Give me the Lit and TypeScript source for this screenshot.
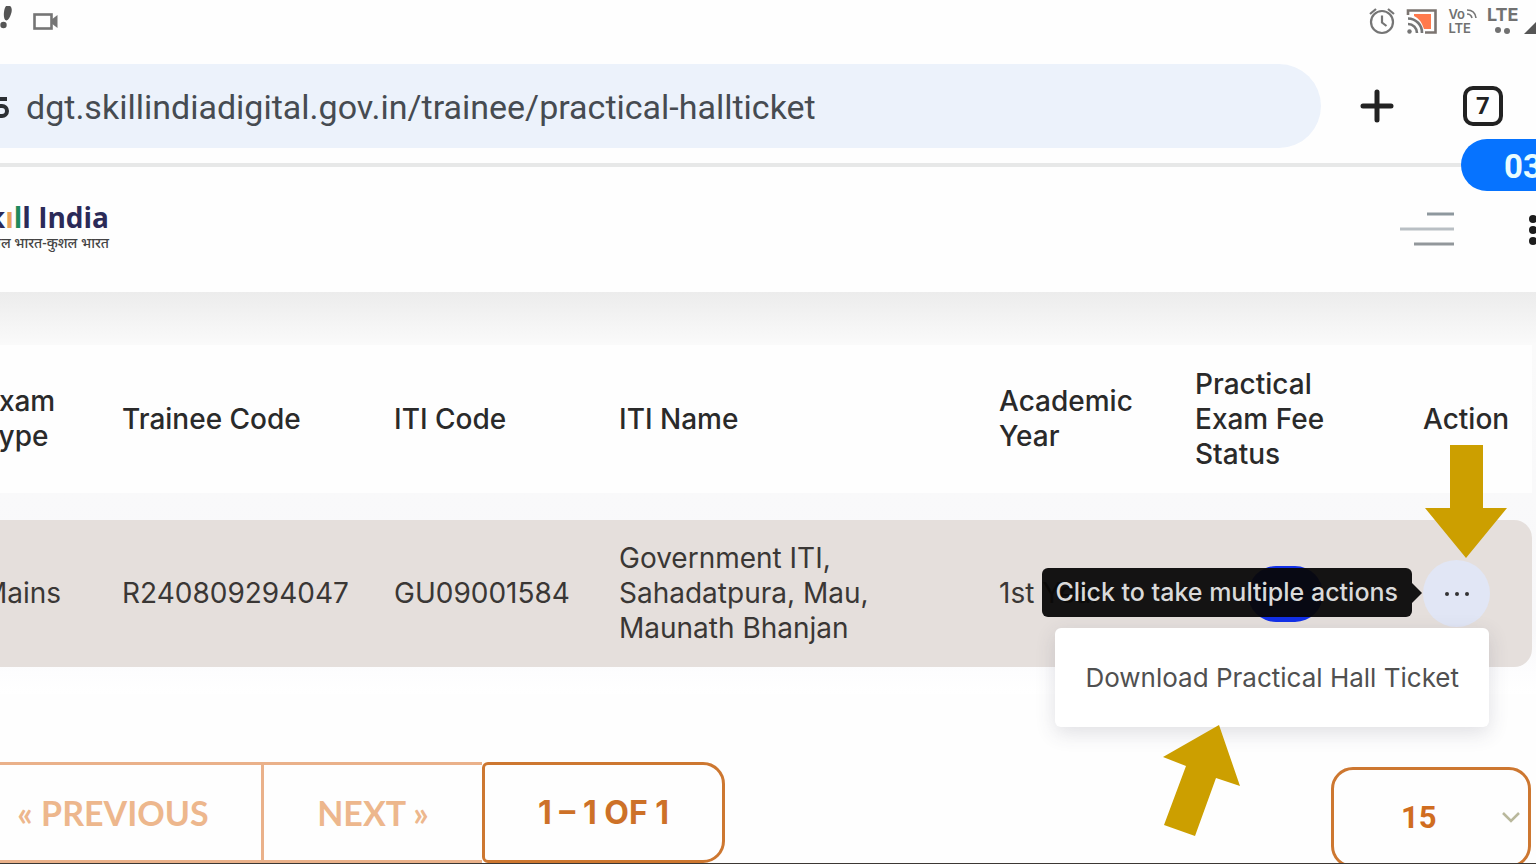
import { LitElement, html, css } from "lit";
import { customElement, state } from "lit/decorators.js";

@customElement("status-bar")
class StatusBar extends LitElement {
  static styles = css`
    :host {
      display: flex;
      justify-content: space-between;
      height: 64px;
      overflow: hidden;
      color: #717171;
      font-family: Inter, sans-serif;
    }
    .group {
      display: flex;
      align-items: flex-start;
      padding-top: 6px;
    }
    .left {
      gap: 20px;
    }
    .right {
      gap: 10px;
      margin-right: -6px;
    }
    svg {
      display: block;
      flex: none;
    }
    .volte {
      font-size: 13px;
      line-height: 14px;
      font-weight: 600;
      padding-top: 1px;
    }
    .volte svg {
      display: inline-block;
    }
    .lte {
      width: 27px;
      font-size: 18px;
      line-height: 18px;
      font-weight: 700;
    }
  `;
  render() {
    return html`
      <div class="group left">
        <svg width="13" height="30" viewBox="0 0 13 30" fill="#555">
          <path d="M8 -1c4 1 4.500 5 3 9-1 3-2.500 6-4.500 6.500C4 14 3.500 10 4 6c.400-4 2-7 4-7z" />
          <circle cx="3.500" cy="19" r="3.200" />
        </svg>
        <svg width="26" height="30" viewBox="0 0 26 30" fill="none">
          <rect x="1.500" y="8.500" width="17" height="14" stroke="#757575" stroke-width="2.600" />
          <path d="M18 14l6.500-5v13L18 17z" fill="#757575" />
        </svg>
      </div>
      <div class="group right">
        <svg width="28" height="30" viewBox="0 0 28 30" fill="none" stroke="#757575" stroke-width="2.200">
          <circle cx="14" cy="16" r="11" />
          <path d="M14 9.500v7l4.500 3.500M2 8l6-5M26 8l-6-5" />
        </svg>
        <svg width="32" height="30" viewBox="0 0 32 30" fill="none">
          <path d="M8 8h17v15h-7Q15 13 8 10z" fill="#ff7a4d" />
          <path d="M2 9V4.500h27.500v22H19" stroke="#7b7470" stroke-width="2.600" />
          <path d="M2 12.500a14 14 0 0 1 14 14.500M2 18a9 9 0 0 1 9 9" stroke="#757575" stroke-width="2.600" />
          <circle cx="3.500" cy="25.500" r="2.200" fill="#757575" />
        </svg>
        <div class="volte">
          Vo<svg width="12" height="10" viewBox="0 0 12 10" fill="none" stroke="#757575" stroke-width="1.600"><path d="M2 1q8 0 9 8M2 5q4 0 5 4" /></svg><br />LTE
        </div>
        <div class="lte">
          LTE
          <svg width="34" height="12" viewBox="0 0 34 12" fill="#717171"><circle cx="11" cy="6" r="3" /><circle cx="20" cy="7" r="3" /></svg>
        </div>
        <svg width="18" height="30" viewBox="0 0 18 30"><path d="M0 28L18 10v18z" fill="#555" /></svg>
      </div>
    `;
  }
}

@customElement("browser-bar")
class BrowserBar extends LitElement {
  static styles = css`
    :host {
      display: block;
      position: relative;
      padding-bottom: 15px;
      border-bottom: 4px solid #e7e8e8;
      font-family: Roboto, sans-serif;
    }
    .bar {
      display: flex;
      align-items: center;
    }
    .pill {
      flex: 1;
      display: flex;
      align-items: center;
      gap: 16px;
      height: 84px;
      background: #ecf2fb;
      border-radius: 0 42px 42px 0;
    }
    .url {
      flex: 1;
      min-width: 0;
      height: 60px;
      padding: 2px 0 0;
      border: 0;
      outline: 0;
      background: none;
      color: #464b51;
      font: 400 34px/58px Roboto, sans-serif;
    }
    button {
      display: block;
      border: 0;
      padding: 0;
      background: none;
      color: #222;
    }
    .plus {
      width: 36px;
      height: 36px;
      margin: 0 68px 0 38px;
    }
    .tabs {
      box-sizing: border-box;
      width: 40px;
      height: 40px;
      margin-right: 33px;
      border: 4px solid #222;
      border-radius: 10px;
      font: 700 24px/32px Roboto, sans-serif;
    }
    svg {
      display: block;
    }
    .timer {
      position: absolute;
      right: 0;
      top: 75px;
      box-sizing: border-box;
      width: 75px;
      height: 52px;
      padding-left: 43px;
      overflow: hidden;
      border-radius: 26px 0 0 26px;
      background: #0673ff;
      color: #e9fcff;
      font: 700 33px/56px Roboto, sans-serif;
    }
  `;
  render() {
    return html`
      <div class="bar">
        <div class="pill">
          <svg width="10" height="28" viewBox="0 0 10 28" fill="none" stroke="#2b2f33" stroke-width="4">
            <path d="M0 7h7M0 14h2a4.500 4.500 0 0 1 0 10H0" />
          </svg>
          <input class="url" aria-label="Address" value="dgt.skillindiadigital.gov.in/trainee/practical-hallticket" />
        </div>
        <button class="plus" aria-label="New tab">
          <svg width="36" height="36" viewBox="0 0 36 36" stroke="#222" stroke-width="5" stroke-linecap="round"><path d="M18 4v28M4 18h28" /></svg>
        </button>
        <button class="tabs" aria-label="Open tabs">7</button>
      </div>
      <div class="timer">03</div>
    `;
  }
}

@customElement("site-header")
class SiteHeader extends LitElement {
  static styles = css`
    :host {
      display: flex;
      justify-content: space-between;
      align-items: center;
      height: 125px;
      overflow: hidden;
    }
    .logo {
      display: block;
      width: 109px;
      padding-bottom: 6px;
      direction: rtl;
      color: #2b2a58;
      text-decoration: none;
      white-space: nowrap;
    }
    .name,
    .tag {
      display: block;
      unicode-bidi: isolate;
    }
    .name span,
    .tag span {
      direction: ltr;
      unicode-bidi: isolate;
    }
    .name {
      font: 700 28px/32px "Open Sans", sans-serif;
    }
    .name .i {
      color: #e9a05a;
    }
    .name .l {
      color: #1f8a5c;
    }
    .tag {
      font: 500 14px/20px "Noto Sans", sans-serif;
      color: #444;
    }
    .tools {
      display: flex;
      align-items: center;
      gap: 73px;
      margin-right: -6px;
    }
    button {
      border: 0;
      padding: 0;
      background: none;
    }
    svg {
      display: block;
    }
  `;
  render() {
    return html`
      <a class="logo" href="#">
        <span class="name"><span>Sk<span class="i">ı</span><span class="l">l</span>l India</span></span>
        <span class="tag"><span lang="hi">कौशल भारत-कुशल भारत</span></span>
      </a>
      <div class="tools">
        <button aria-label="Menu">
          <svg width="56" height="40" viewBox="0 0 56 40" stroke-width="3">
            <path d="M28 4h27" stroke="#8e989e" /><path d="M1 19h54" stroke="#b9bfc4" /><path d="M15 34h40" stroke="#92979b" />
          </svg>
        </button>
        <button aria-label="More options">
          <svg width="14" height="34" viewBox="0 0 14 34" fill="#1c1c1c"><circle cx="5" cy="6" r="4" /><circle cx="5" cy="17" r="4" /><circle cx="5" cy="28" r="4" /></svg>
        </button>
      </div>
    `;
  }
}

const headers = ["Exam Type", "Trainee Code", "ITI Code", "ITI Name", "Academic Year", "Practical Exam Fee Status", "Action"];

@customElement("trainee-table")
class TraineeTable extends LitElement {
  static styles = css`
    :host {
      display: block;
      padding: 26px 4px 0 0;
      background: linear-gradient(#ececec, #fafafa 52px, #f8f8fa 340px, #fdfdfe 380px, #fff);
      font-family: Inter, sans-serif;
    }
    .scroll {
      margin-left: -42px;
    }
    table {
      width: 100%;
      table-layout: fixed;
      border-collapse: separate;
      border-spacing: 0 27px;
      font-size: 28px;
      line-height: 35px;
    }
    th,
    td {
      height: 147px;
      padding: 0 24px;
      text-align: left;
      vertical-align: middle;
      box-sizing: border-box;
    }
    th {
      height: 148px;
      background: #fefefe;
      color: #2a2a2a;
      font-weight: 500;
    }
    td {
      background: #e5dfdc;
      color: #3a3735;
    }
    th:last-child,
    td:last-child {
      padding-right: 0;
    }
    td:last-child {
      border-radius: 0 18px 18px 0;
    }
    .c0 { width: 140px; }
    .c1 { width: 272px; }
    .c2 { width: 225px; }
    .c4 { width: 196px; }
    .c5 { width: 228px; }
    .c6 { width: 133px; }
    .institute {
      padding-right: 90px;
    }
    .status {
      text-align: center;
    }
    .badge {
      display: block;
      width: 75px;
      height: 56px;
      margin: 0 auto;
      border-radius: 28px;
      background: #1230e8;
    }
    .actions {
      position: relative;
      width: 67px;
      height: 67px;
    }
    .more {
      display: block;
      width: 67px;
      height: 67px;
      padding: 0;
      border: 0;
      border-radius: 50%;
      background: #e1e6f5;
    }
    .more svg {
      display: block;
      margin: auto;
    }
    .tooltip {
      position: absolute;
      top: 8px;
      right: 78px;
      padding: 0 14px;
      border-radius: 6px;
      background: rgba(8, 7, 7, 0.95);
      color: #dadada;
      font-size: 25px;
      font-weight: 500;
      line-height: 49px;
      white-space: nowrap;
    }
    .tooltip::after {
      content: "";
      position: absolute;
      left: 100%;
      top: 15px;
      border: 10px solid transparent;
      border-left-color: #141313;
      border-right: 0;
    }
    .menu {
      position: absolute;
      top: 68px;
      right: 1px;
      margin: 0;
      padding: 0;
      list-style: none;
      border-radius: 6px;
      background: #fff;
      box-shadow: 0 6px 20px rgba(60, 60, 90, 0.16);
    }
    .item {
      display: block;
      padding: 0 30px;
      border: 0;
      background: none;
      color: #505050;
      font: 400 26px/99px Inter, sans-serif;
      white-space: nowrap;
    }
    .arrow {
      position: absolute;
      display: block;
      pointer-events: none;
      fill: #cc9f00;
    }
    .down {
      left: 2px;
      top: -115px;
    }
    .up {
      left: 108px;
      top: 97px;
    }
  `;
  @state() open = true;
  render() {
    return html`
      <div class="scroll">
        <table>
          <thead>
            <tr>
              ${headers.map((h, i) => html`<th scope="col" class="c${i}">${h}</th>`)}
            </tr>
          </thead>
          <tbody>
            <tr>
              <td>Mains</td>
              <td>R240809294047</td>
              <td>GU09001584</td>
              <td class="institute">Government ITI, Sahadatpura, Mau, Maunath Bhanjan</td>
              <td>1st Year</td>
              <td class="status"><span class="badge"></span></td>
              <td>
                <div class="actions">
                  <button class="more" aria-label="Actions" @click=${() => (this.open = !this.open)}>
                    <svg width="30" height="6" viewBox="0 0 30 6" fill="#333"><circle cx="5" cy="3" r="2" /><circle cx="15" cy="3" r="2" /><circle cx="25" cy="3" r="2" /></svg>
                  </button>
                  <div class="tooltip" role="tooltip">Click to take multiple actions</div>
                  ${this.open
                    ? html`<ul class="menu">
                        <li>
                          <button class="item">Download Practical Hall Ticket</button>
                          <svg class="arrow up" width="77" height="111" viewBox="0 0 77 111"><path d="M56 0L77 61L53 53L32 111L1 100L23 41L0 32z" /></svg>
                        </li>
                      </ul>`
                    : ""}
                  <svg class="arrow down" width="82" height="113" viewBox="0 0 82 113"><path d="M25 0h33v63h24L41 113L0 63h25z" /></svg>
                </div>
              </td>
            </tr>
          </tbody>
        </table>
      </div>
    `;
  }
}

@customElement("table-pager")
class TablePager extends LitElement {
  static styles = css`
    :host {
      display: flex;
      justify-content: space-between;
      align-items: flex-start;
      padding: 68px 5px 0 0;
      font-family: Lato, sans-serif;
    }
    .pages {
      display: flex;
      margin-left: -30px;
    }
    .pages > * {
      box-sizing: border-box;
      height: 101px;
      margin: 0;
      border: 3px solid #eab18a;
      background: none;
      color: #edb78d;
      font: 700 34px/95px Lato, sans-serif;
      text-align: center;
    }
    .prev {
      width: 294px;
      padding: 0 8px 0 0;
    }
    .pages .next {
      width: 218px;
      padding: 0;
      border-left: 0;
      border-right: 0;
    }
    .pages .range {
      width: 243px;
      border-color: #cd7730;
      border-radius: 6px 22px 22px 6px;
      color: #cd7128;
      font: 700 32px/95px Inter, sans-serif;
    }
    .size {
      position: relative;
      margin-top: 5px;
    }
    select {
      appearance: none;
      box-sizing: border-box;
      width: 200px;
      height: 101px;
      padding: 0 0 0 67px;
      border: 3px solid #cd7730;
      border-radius: 22px;
      background: none;
      color: #d06d20;
      font: 700 31px/95px Roboto, sans-serif;
    }
    .chevron {
      position: absolute;
      right: 11px;
      top: 44px;
      pointer-events: none;
    }
  `;
  render() {
    return html`
      <nav class="pages" aria-label="Pagination">
        <button class="prev">« PREVIOUS</button>
        <button class="next">NEXT »</button>
        <span class="range">1 – 1 OF 1</span>
      </nav>
      <div class="size">
        <select aria-label="Rows per page">
          <option selected>15</option>
          <option>30</option>
        </select>
        <svg class="chevron" width="18" height="12" viewBox="0 0 18 12" fill="none" stroke="#b9b89c" stroke-width="2.500"><path d="M1 2l8 8 8-8" /></svg>
      </div>
    `;
  }
}

@customElement("app-root")
class AppRoot extends LitElement {
  static styles = css`
    :host {
      display: block;
      position: relative;
      height: 100vh;
      overflow: hidden;
      background: #fefefe;
    }
    .edge {
      position: absolute;
      left: 0;
      right: 0;
      bottom: 0;
      height: 1px;
      background: #3c3834;
    }
  `;
  render() {
    return html`
      <status-bar></status-bar>
      <browser-bar></browser-bar>
      <site-header></site-header>
      <trainee-table></trainee-table>
      <table-pager></table-pager>
      <div class="edge"></div>
    `;
  }
}
